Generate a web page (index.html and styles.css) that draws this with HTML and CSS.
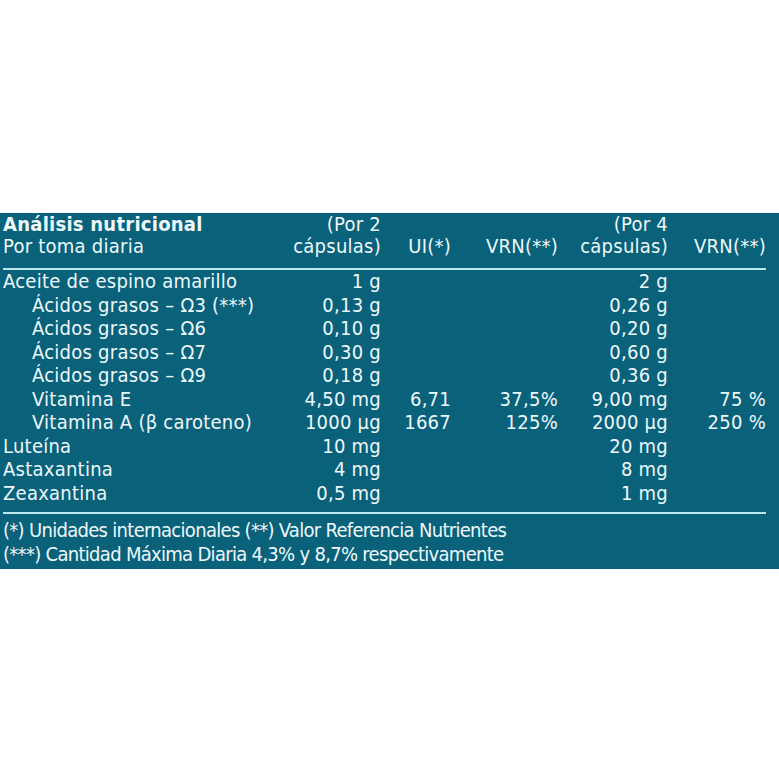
FILE: index.html
```html
<!DOCTYPE html>
<html lang="es">
<head>
<meta charset="UTF-8" />
<meta name="viewport" content="width=device-width, initial-scale=1" />
<title>Análisis nutricional</title>
<link rel="stylesheet" href="styles.css">
</head>
<body>
  <div class="panel">
    <table class="nutri">
      <colgroup>
        <col class="c-label">
        <col class="c-q2">
        <col class="c-ui">
        <col class="c-vrn">
        <col class="c-q4">
        <col class="c-vrn2">
      </colgroup>
      <thead>
        <tr>
          <th class="label"><b>Análisis nutricional</b><br>Por toma diaria</th>
          <th>(Por 2<br>cápsulas)</th>
          <th class="bottom">UI(*)</th>
          <th class="bottom">VRN(**)</th>
          <th>(Por 4<br>cápsulas)</th>
          <th class="bottom">VRN(**)</th>
        </tr>
      </thead>
      <tbody>
        <tr><td class="label">Aceite de espino amarillo</td><td>1 g</td><td></td><td></td><td>2 g</td><td></td></tr>
        <tr><td class="label sub">Ácidos grasos – Ω3 (***)</td><td>0,13 g</td><td></td><td></td><td>0,26 g</td><td></td></tr>
        <tr><td class="label sub">Ácidos grasos – Ω6</td><td>0,10 g</td><td></td><td></td><td>0,20 g</td><td></td></tr>
        <tr><td class="label sub">Ácidos grasos – Ω7</td><td>0,30 g</td><td></td><td></td><td>0,60 g</td><td></td></tr>
        <tr><td class="label sub">Ácidos grasos – Ω9</td><td>0,18 g</td><td></td><td></td><td>0,36 g</td><td></td></tr>
        <tr><td class="label sub">Vitamina E</td><td>4,50 mg</td><td>6,71</td><td>37,5%</td><td>9,00 mg</td><td>75 %</td></tr>
        <tr><td class="label sub">Vitamina A (β caroteno)</td><td>1000 µg</td><td>1667</td><td>125%</td><td>2000 µg</td><td>250 %</td></tr>
        <tr><td class="label">Luteína</td><td>10 mg</td><td></td><td></td><td>20 mg</td><td></td></tr>
        <tr><td class="label">Astaxantina</td><td>4 mg</td><td></td><td></td><td>8 mg</td><td></td></tr>
        <tr class="last"><td class="label">Zeaxantina</td><td>0,5 mg</td><td></td><td></td><td>1 mg</td><td></td></tr>
      </tbody>
    </table>
    <div class="notes">
      <p>(*) Unidades internacionales (**) Valor Referencia Nutrientes</p>
      <p>(***) Cantidad Máxima Diaria 4,3% y 8,7% respectivamente</p>
    </div>
  </div>
</body>
</html>
```

FILE: styles.css
```css
body {
  margin: 0;
  background: #fff;
  font-family: 'DejaVu Sans Condensed', 'DejaVu Sans', sans-serif;
  font-stretch: condensed;
}

.panel {
  margin-top: 213px;
  background: #0a617a;
  color: #eef8fa;
  font-size: 20px;
  line-height: 23.5px;
  padding: 0 13px 3px 3px;
}

/* Table */
.nutri {
  width: 100%;
  border-collapse: collapse;
  table-layout: fixed;
  letter-spacing: 0.25px;
}

.c-label { width: 290px; }
.c-q2 { width: 88px; }
.c-ui { width: 70px; }
.c-vrn { width: 107px; }
.c-q4 { width: 110px; }
.c-vrn2 { width: 98px; }

.nutri th,
.nutri td {
  padding: 0;
  text-align: right;
  font-weight: normal;
  white-space: nowrap;
  vertical-align: top;
}

.nutri th.bottom {
  vertical-align: bottom;
}

.nutri .label {
  text-align: left;
}

.nutri .sub {
  padding-left: 29px;
}

.nutri thead th {
  line-height: 22px;
  padding-bottom: 11px;
  border-bottom: 2px solid #bde7ee;
}

.nutri tr.last td {
  padding-bottom: 7px;
  border-bottom: 2px solid #bde7ee;
}

/* Footnotes */
.notes {
  padding-top: 5px;
  letter-spacing: -0.7px;
}

.notes p {
  margin: 0;
}
```
